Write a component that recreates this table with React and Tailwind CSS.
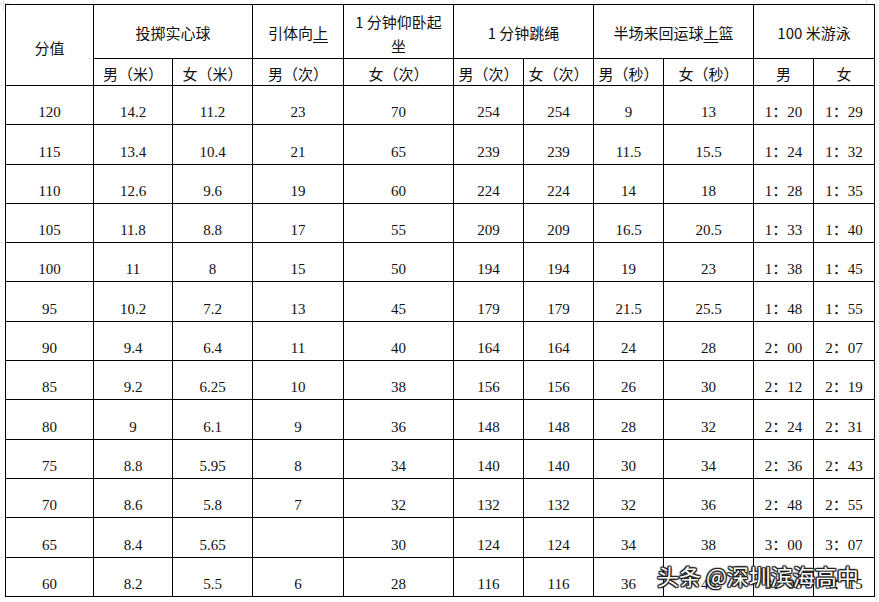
import React from 'react';

const rows = [
  ['120', '14.2', '11.2', '23', '70', '254', '254', '9', '13', '1：20', '1：29'],
  ['115', '13.4', '10.4', '21', '65', '239', '239', '11.5', '15.5', '1：24', '1：32'],
  ['110', '12.6', '9.6', '19', '60', '224', '224', '14', '18', '1：28', '1：35'],
  ['105', '11.8', '8.8', '17', '55', '209', '209', '16.5', '20.5', '1：33', '1：40'],
  ['100', '11', '8', '15', '50', '194', '194', '19', '23', '1：38', '1：45'],
  ['95', '10.2', '7.2', '13', '45', '179', '179', '21.5', '25.5', '1：48', '1：55'],
  ['90', '9.4', '6.4', '11', '40', '164', '164', '24', '28', '2：00', '2：07'],
  ['85', '9.2', '6.25', '10', '38', '156', '156', '26', '30', '2：12', '2：19'],
  ['80', '9', '6.1', '9', '36', '148', '148', '28', '32', '2：24', '2：31'],
  ['75', '8.8', '5.95', '8', '34', '140', '140', '30', '34', '2：36', '2：43'],
  ['70', '8.6', '5.8', '7', '32', '132', '132', '32', '36', '2：48', '2：55'],
  ['65', '8.4', '5.65', '', '30', '124', '124', '34', '38', '3：00', '3：07'],
  ['60', '8.2', '5.5', '6', '28', '116', '116', '36', '40', '3：08', '3：15'],
];

const widths = [88, 79, 80, 91, 110, 70, 70, 70, 90, 60, 61];

const cjk = "font-['Noto_Sans_CJK_SC',sans-serif]";
const serif = "font-['Liberation_Serif','Noto_Sans_CJK_SC',serif]";

function App() {
  return (
    <div className="relative w-[879px] h-[602px] bg-white overflow-hidden text-[#111]">
      {/* crop marks */}
      <div className="absolute left-[3px] top-0 w-px h-[10px] bg-[#ddd]" />
      <div className="absolute left-0 top-[3px] w-[10px] h-px bg-[#ddd]" />
      <div className="absolute left-[866px] top-0 w-px h-[4px] bg-[#ddd]" />
      <div className="absolute left-[876px] top-0 w-px h-[602px] bg-[#eee]" />

      <table className="ml-[5px] mt-[4px] border-collapse table-fixed w-[869px]">
        <colgroup>
          {widths.map((w, i) => (
            <col key={i} style={{ width: w }} />
          ))}
        </colgroup>
        <thead>
          <tr className={`h-[54px] text-[15px] ${cjk}`}>
            <th rowSpan={2} className="border border-black font-normal align-middle pt-[6px] leading-[20px]">分值</th>
            <th colSpan={2} className="border border-black font-normal align-middle pt-[3px] leading-[20px]">投掷实心球</th>
            <th className="border border-black font-normal align-middle pt-[3px] leading-[20px]">
              引体向<span className="underline underline-offset-[3px]">上</span>
            </th>
            <th className="border border-black font-normal align-top pt-[5px] leading-[24px]">
              1 分钟仰卧起
              <br />
              坐
            </th>
            <th colSpan={2} className="border border-black font-normal align-middle pt-[3px] leading-[20px]">1 分钟跳绳</th>
            <th colSpan={2} className="border border-black font-normal align-middle pt-[3px] leading-[20px] whitespace-nowrap">
              半场来回运球<span className="underline underline-offset-[3px]">上</span>篮
            </th>
            <th colSpan={2} className="border border-black font-normal align-middle pt-[3px] leading-[20px]">100 米游泳</th>
          </tr>
          <tr className={`h-[27px] text-[15px] ${cjk}`}>
            {['男（米）', '女（米）', '男（次）', '女（次）', '男（次）', '女（次）', '男（秒）', '女（秒）', '男', '女'].map(
              (t, i) => (
                <th key={i} className="border border-black font-normal align-bottom pb-[1px] leading-[20px] whitespace-nowrap">
                  {t}
                </th>
              )
            )}
          </tr>
        </thead>
        <tbody className={`text-[15px] ${serif}`}>
          {rows.map((r, i) => (
            <tr key={i} className="h-[39.3px]">
              {r.map((c, j) => (
                <td key={j} className="border border-black text-center align-bottom pb-[3px] leading-[18px] whitespace-nowrap">
                  {c}
                </td>
              ))}
            </tr>
          ))}
        </tbody>
      </table>

      {/* watermark */}
      <div
        className={`absolute left-[657px] top-[560px] text-[22px] leading-[30px] text-white whitespace-nowrap ${cjk}`}
        style={{
          textShadow:
            '0 0 1px #222, 1px 1px 1px #222, -1px -1px 1px #222, 1px -1px 1px #222, -1px 1px 1px #222, 0 1px 1px #222, 0 -1px 1px #222, 1px 0 1px #222, -1px 0 1px #222',
        }}
      >
        头条 @深圳滨海高中
      </div>
    </div>
  );
}

export default App;
